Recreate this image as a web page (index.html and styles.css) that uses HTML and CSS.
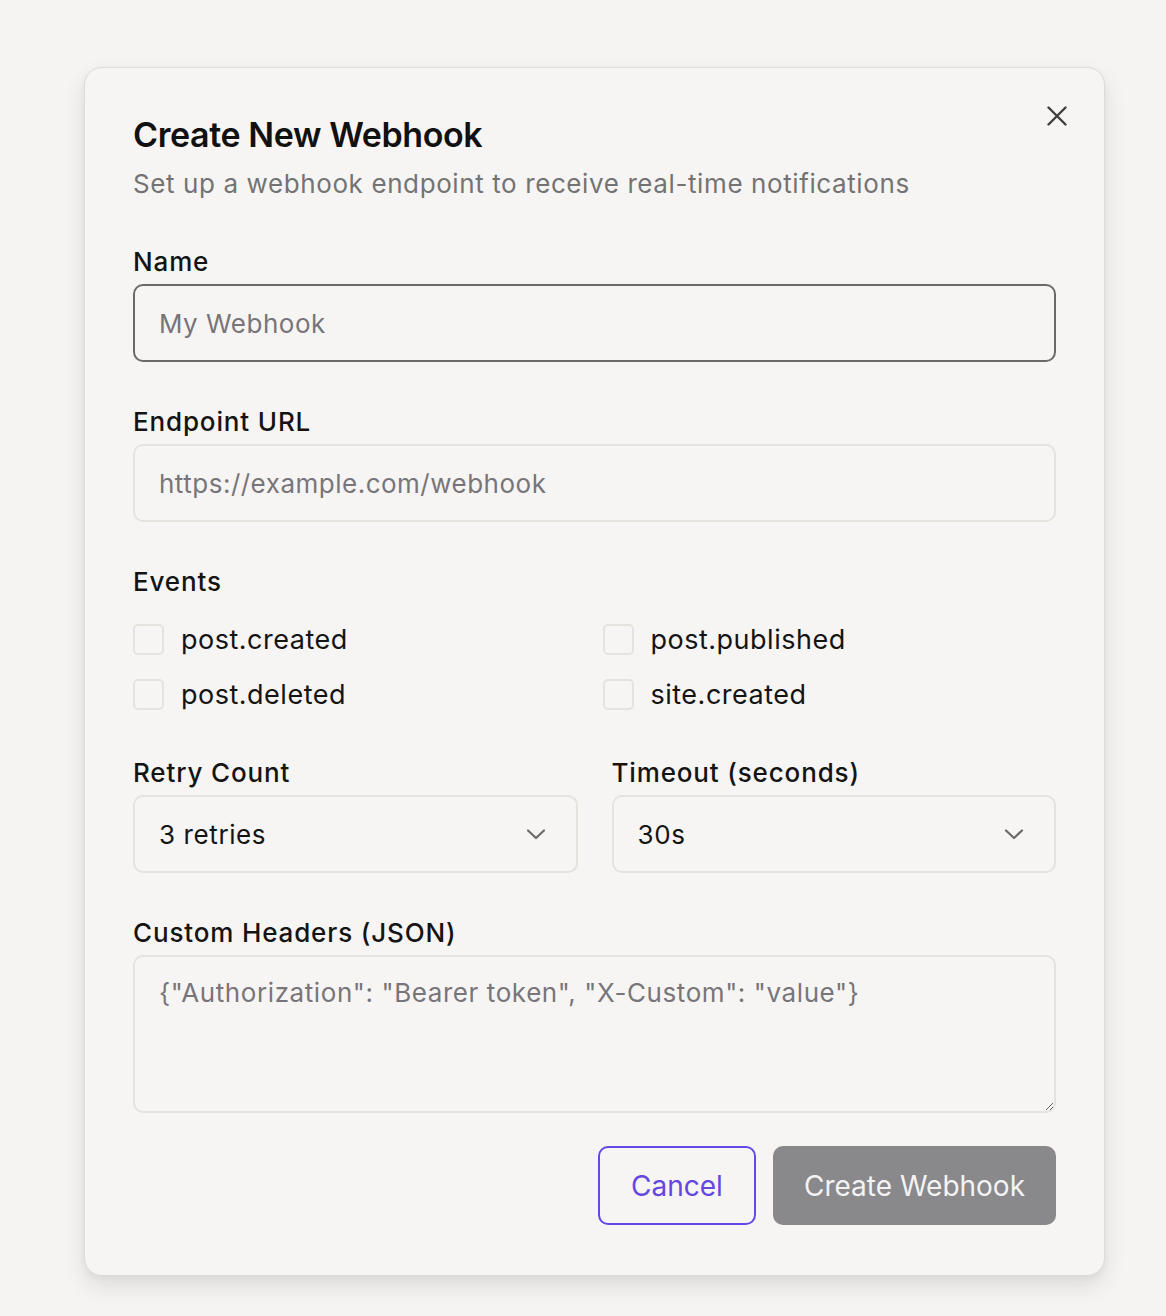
FILE: index.html
```html
<!DOCTYPE html>
<html lang="en">
<head>
<meta charset="utf-8">
<title>Create New Webhook</title>
<link rel="stylesheet" href="styles.css">
</head>
<body>
<div class="backdrop">
  <div class="dialog" role="dialog" aria-labelledby="dlg-title">
    <button class="close" aria-label="Close">
      <svg width="20" height="20" viewBox="0 0 20 20" fill="none" stroke="#3f3f3f" stroke-width="2.4" stroke-linecap="round"><path d="M1.5 1.5 L18.5 18.5 M18.5 1.5 L1.5 18.5"/></svg>
    </button>
    <h2 class="title" id="dlg-title">Create New Webhook</h2>
    <p class="subtitle">Set up a webhook endpoint to receive real-time notifications</p>

    <div class="form">
      <div class="field">
        <label class="label">Name</label>
        <input class="input input-focus" type="text" placeholder="My Webhook">
      </div>
      <div class="field">
        <label class="label">Endpoint URL</label>
        <input class="input" type="text" placeholder="https://example.com/webhook">
      </div>
      <div class="field">
        <label class="label">Events</label>
        <div class="events">
          <label class="event"><span class="box"></span>post.created</label>
          <label class="event"><span class="box"></span>post.published</label>
          <label class="event"><span class="box"></span>post.deleted</label>
          <label class="event"><span class="box"></span>site.created</label>
        </div>
      </div>
      <div class="row2">
        <div class="field">
          <label class="label">Retry Count</label>
          <div class="select"><span>3 retries</span>
            <svg width="20" height="12" viewBox="0 0 20 12" fill="none" stroke="#6b6b6b" stroke-width="2.2" stroke-linecap="round" stroke-linejoin="round"><path d="M2 2.5 L10 10 L18 2.5"/></svg>
          </div>
        </div>
        <div class="field">
          <label class="label">Timeout (seconds)</label>
          <div class="select"><span>30s</span>
            <svg width="20" height="12" viewBox="0 0 20 12" fill="none" stroke="#6b6b6b" stroke-width="2.2" stroke-linecap="round" stroke-linejoin="round"><path d="M2 2.5 L10 10 L18 2.5"/></svg>
          </div>
        </div>
      </div>
      <div class="field">
        <label class="label">Custom Headers (JSON)</label>
        <textarea class="textarea" placeholder='{"Authorization": "Bearer token", "X-Custom": "value"}'></textarea>
      </div>
    </div>

    <div class="actions">
      <button class="btn btn-outline">Cancel</button>
      <button class="btn btn-primary">Create Webhook</button>
    </div>
  </div>
</div>
</body>
</html>
```

FILE: styles.css
```css
* { box-sizing: border-box; }

html, body {
  margin: 0;
  padding: 0;
  background: #f5f4f2;
  font-family: Inter, "Noto Sans", "Liberation Sans", sans-serif;
  color: #141414;
}

.backdrop {
  padding: 67px 0 0 84px;
  min-height: 1316px;
}

.dialog {
  position: relative;
  width: 1021px;
  background: #f7f5f3;
  border: 1.5px solid #dedad6;
  border-radius: 18px;
  padding: 46px 48px 50px 48px;
  box-shadow: 0 10px 22px rgba(0, 0, 0, 0.1), 0 2px 6px rgba(0, 0, 0, 0.04);
}

.close {
  position: absolute;
  top: 38px;
  right: 37px;
  width: 20px;
  height: 20px;
  padding: 0;
  border: 0;
  background: transparent;
  display: flex;
  cursor: pointer;
}

.title {
  margin: 0;
  font-size: 34px;
  line-height: 42px;
  font-weight: 600;
  letter-spacing: -0.4px;
  color: #111;
}

.subtitle {
  margin: 10px 0 0 0;
  font-size: 26px;
  line-height: 36px;
  letter-spacing: 0.6px;
  color: #737373;
}

.form {
  margin-top: 42px;
  display: flex;
  flex-direction: column;
  gap: 42px;
}

.field {
  display: flex;
  flex-direction: column;
  gap: 4px;
  min-width: 0;
}

.label {
  font-size: 26px;
  line-height: 36px;
  font-weight: 500;
  letter-spacing: 0.85px;
  color: #141414;
}

.input {
  height: 78px;
  border: 2px solid #e6e2de;
  border-radius: 10px;
  background: transparent;
  padding: 0 24px;
  font-family: inherit;
  font-size: 26px;
  letter-spacing: 0.5px;
  color: #141414;
  outline: none;
}

.input::placeholder,
.textarea::placeholder {
  color: #77757a;
}

.input-focus {
  border-color: #6d6966;
}

.events {
  margin-top: 16px;
  display: grid;
  grid-template-columns: 1fr 1fr;
  column-gap: 16px;
  row-gap: 17px;
}

.event {
  display: flex;
  align-items: center;
  gap: 17px;
  height: 38px;
  font-size: 27px;
  letter-spacing: 0.5px;
  color: #141414;
}

.box {
  width: 31px;
  height: 31px;
  border: 2px solid #e6e2de;
  border-radius: 5px;
  flex: none;
}

.row2 {
  display: grid;
  grid-template-columns: 1fr 1fr;
  column-gap: 34px;
}

.select {
  height: 78px;
  border: 2px solid #e6e2de;
  border-radius: 10px;
  padding: 0 30px 0 24px;
  display: flex;
  align-items: center;
  justify-content: space-between;
  font-size: 26px;
  letter-spacing: 0.6px;
  color: #141414;
}

.textarea {
  height: 158px;
  border: 2px solid #e6e2de;
  border-radius: 10px;
  background: transparent;
  padding: 18px 24px;
  font-family: inherit;
  font-size: 26px;
  line-height: 36px;
  letter-spacing: 0.58px;
  color: #141414;
  resize: vertical;
  outline: none;
}

.actions {
  margin-top: 33px;
  display: flex;
  justify-content: flex-end;
  gap: 17px;
}

.btn {
  height: 79px;
  border-radius: 10px;
  font-family: inherit;
  font-size: 28px;
  padding: 0;
  cursor: pointer;
}

.btn-outline {
  background: transparent;
  border: 2px solid #6748e6;
  color: #6446e0;
  width: 158px;
}

.btn-primary {
  background: #89888b;
  border: 0;
  color: #f4f3f3;
  width: 283px;
}
```
